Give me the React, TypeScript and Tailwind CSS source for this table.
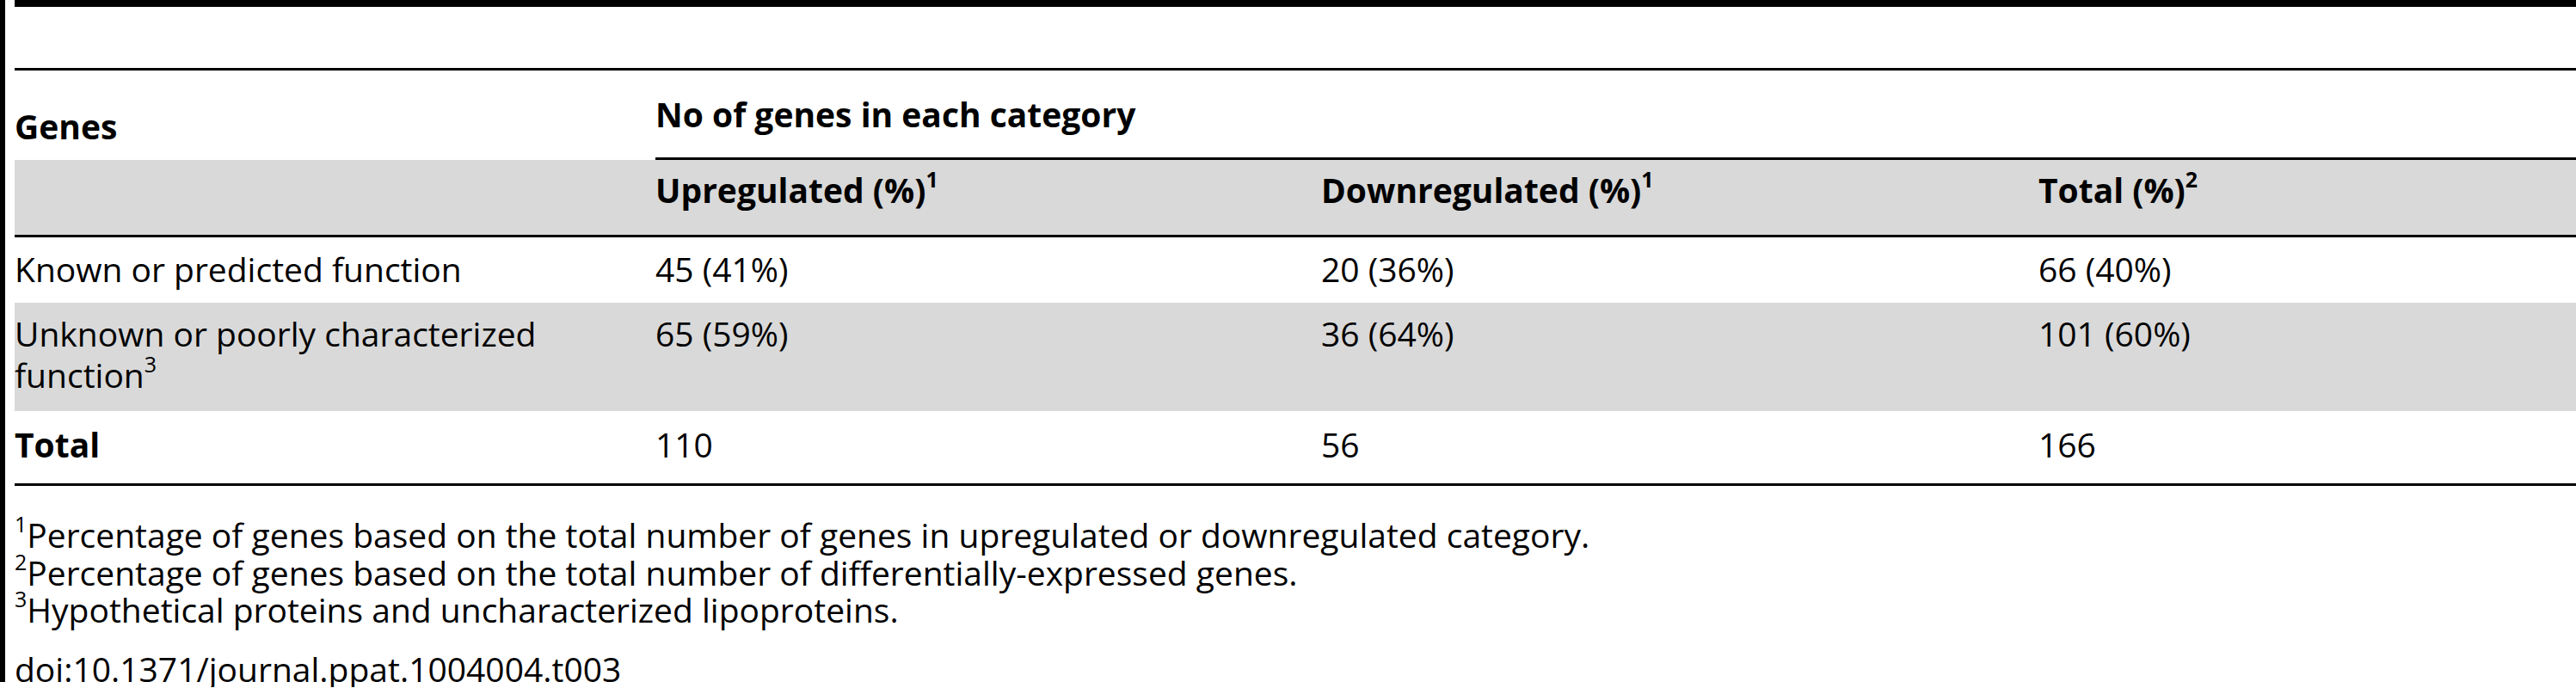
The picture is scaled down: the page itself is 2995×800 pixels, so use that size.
const cols = 'grid grid-cols-[745px_774px_834px_1fr]';

function Sup({ children }: { children: React.ReactNode }) {
  return <sup className="text-[25px] relative -top-[18px]">{children}</sup>;
}

type Row = { label: React.ReactNode; up: string; down: string; total: string; cls: string };

const rows: Row[] = [
  { label: 'Known or predicted function', up: '45 (41%)', down: '20 (36%)', total: '66 (40%)', cls: 'h-[76px] pt-[13px]' },
  {
    label: (
      <>
        Unknown or poorly characterized function<Sup>3</Sup>
      </>
    ),
    up: '65 (59%)',
    down: '36 (64%)',
    total: '101 (60%)',
    cls: 'h-[126px] pt-[12px] bg-[#d9d9d9]',
  },
  { label: <span className="font-bold">Total</span>, up: '110', down: '56', total: '166', cls: 'h-[87px] pt-[15px] border-b-[3px] border-black' },
];

export default function App() {
  return (
    <div className="flex w-[2995px] bg-white text-black font-['Open_Sans',sans-serif] text-[39px] leading-[48px]">
      <div className="w-[6px] h-[793px] bg-black shrink-0" />
      <div className="ml-[11px] flex-1 min-w-0">
        <div className="h-[8px] bg-black" />
        <div className="h-[71px]" />

        <div className="border-t-[3px] border-black">
          {/* header */}
          <div className="grid grid-cols-[745px_1fr] h-[104px] items-end">
            <div className="font-bold pb-[15px]">Genes</div>
            <div className="font-bold border-b-[3px] border-black pb-[26px]">No of genes in each category</div>
          </div>
          <div className={`${cols} h-[90px] pt-[11px] bg-[#d9d9d9] border-b-[3px] border-black font-bold`}>
            <div />
            <div>
              Upregulated (%)<Sup>1</Sup>
            </div>
            <div>
              Downregulated (%)<Sup>1</Sup>
            </div>
            <div>
              Total (%)<Sup>2</Sup>
            </div>
          </div>

          {/* body */}
          {rows.map((r, i) => (
            <div key={i} className={`${cols} ${r.cls}`}>
              <div className="pr-4">{r.label}</div>
              <div>{r.up}</div>
              <div>{r.down}</div>
              <div>{r.total}</div>
            </div>
          ))}
        </div>

        <div className="mt-[35px] leading-[43.5px]">
          <p>
            <Sup>1</Sup>Percentage of genes based on the total number of genes in upregulated or downregulated category.
          </p>
          <p>
            <Sup>2</Sup>Percentage of genes based on the total number of differentially-expressed genes.
          </p>
          <p>
            <Sup>3</Sup>Hypothetical proteins and uncharacterized lipoproteins.
          </p>
          <p className="mt-[25px]">doi:10.1371/journal.ppat.1004004.t003</p>
        </div>
      </div>
    </div>
  );
}
